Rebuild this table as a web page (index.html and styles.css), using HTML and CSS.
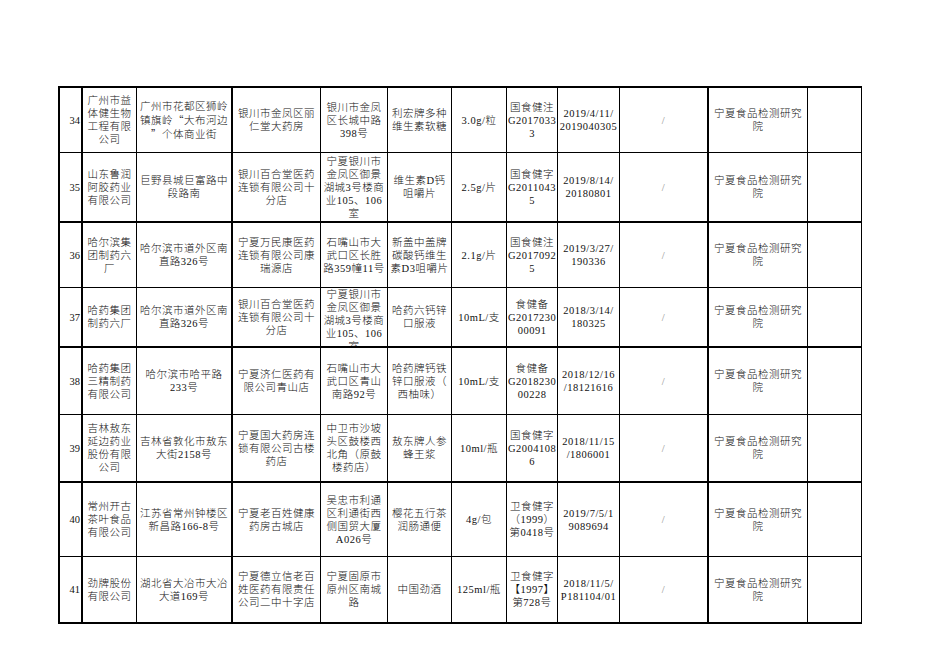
FILE: index.html
```html
<!DOCTYPE html>
<html lang="zh-CN">
<head>
<meta charset="utf-8">
<title>抽检结果</title>
<link rel="stylesheet" href="styles.css">
</head>
<body>
<div class="sheet">
  <div class="table">
    <div class="row r34">
      <div class="cell"><p>34</p></div>
      <div class="cell"><p>广州市益<br>体健生物<br>工程有限<br>公司</p></div>
      <div class="cell"><p>广州市花都区狮岭<br>镇旗岭<span class="q">“</span>大布河边<br><span class="q">”</span>个体商业街</p></div>
      <div class="cell"><p>银川市金凤区丽<br>仁堂大药房</p></div>
      <div class="cell"><p>银川市金凤<br>区长城中路<br>398号</p></div>
      <div class="cell"><p>利宏牌多种<br>维生素软糖</p></div>
      <div class="cell"><p>3.0g/粒</p></div>
      <div class="cell"><p>国食健注<br>G2017033<br>3</p></div>
      <div class="cell"><p>2019/4/11/<br>2019040305</p></div>
      <div class="cell"><p class="none">/</p></div>
      <div class="cell"><p>宁夏食品检测研究<br>院</p></div>
      <div class="cell"></div>
    </div>
    <div class="row r35 thick">
      <div class="cell"><p>35</p></div>
      <div class="cell"><p>山东鲁润<br>阿胶药业<br>有限公司</p></div>
      <div class="cell"><p>巨野县城巨富路中<br>段路南</p></div>
      <div class="cell"><p>银川百合堂医药<br>连锁有限公司十<br>分店</p></div>
      <div class="cell"><p>宁夏银川市<br>金凤区御景<br>湖城3号楼商<br>业105、106<br>室</p></div>
      <div class="cell"><p>维生素D钙<br>咀嚼片</p></div>
      <div class="cell"><p>2.5g/片</p></div>
      <div class="cell"><p>国食健字<br>G2011043<br>5</p></div>
      <div class="cell"><p>2019/8/14/<br>20180801</p></div>
      <div class="cell"><p class="none">/</p></div>
      <div class="cell"><p>宁夏食品检测研究<br>院</p></div>
      <div class="cell"></div>
    </div>
    <div class="row r36">
      <div class="cell"><p>36</p></div>
      <div class="cell"><p>哈尔滨集<br>团制药六<br>厂</p></div>
      <div class="cell"><p>哈尔滨市道外区南<br>直路326号</p></div>
      <div class="cell"><p>宁夏万民康医药<br>连锁有限公司康<br>瑞源店</p></div>
      <div class="cell"><p>石嘴山市大<br>武口区长胜<br>路359幢11号</p></div>
      <div class="cell"><p>新盖中盖牌<br>碳酸钙维生<br>素D3咀嚼片</p></div>
      <div class="cell"><p>2.1g/片</p></div>
      <div class="cell"><p>国食健注<br>G2017092<br>5</p></div>
      <div class="cell"><p>2019/3/27/<br>190336</p></div>
      <div class="cell"><p class="none">/</p></div>
      <div class="cell"><p>宁夏食品检测研究<br>院</p></div>
      <div class="cell"></div>
    </div>
    <div class="row r37 thick">
      <div class="cell"><p>37</p></div>
      <div class="cell"><p>哈药集团<br>制药六厂</p></div>
      <div class="cell"><p>哈尔滨市道外区南<br>直路326号</p></div>
      <div class="cell"><p>银川百合堂医药<br>连锁有限公司十<br>分店</p></div>
      <div class="cell"><p>宁夏银川市<br>金凤区御景<br>湖城3号楼商<br>业105、106<br>室</p></div>
      <div class="cell"><p>哈药六钙锌<br>口服液</p></div>
      <div class="cell"><p>10mL/支</p></div>
      <div class="cell"><p>食健备<br>G2017230<br>00091</p></div>
      <div class="cell"><p>2018/3/14/<br>180325</p></div>
      <div class="cell"><p class="none">/</p></div>
      <div class="cell"><p>宁夏食品检测研究<br>院</p></div>
      <div class="cell"></div>
    </div>
    <div class="row r38">
      <div class="cell"><p>38</p></div>
      <div class="cell"><p>哈药集团<br>三精制药<br>有限公司</p></div>
      <div class="cell"><p>哈尔滨市哈平路<br>233号</p></div>
      <div class="cell"><p>宁夏济仁医药有<br>限公司青山店</p></div>
      <div class="cell"><p>石嘴山市大<br>武口区青山<br>南路92号</p></div>
      <div class="cell"><p>哈药牌钙铁<br>锌口服液（<br>西柚味）</p></div>
      <div class="cell"><p>10mL/支</p></div>
      <div class="cell"><p>食健备<br>G2018230<br>00228</p></div>
      <div class="cell"><p>2018/12/16<br>/18121616</p></div>
      <div class="cell"><p class="none">/</p></div>
      <div class="cell"><p>宁夏食品检测研究<br>院</p></div>
      <div class="cell"></div>
    </div>
    <div class="row r39 thick">
      <div class="cell"><p>39</p></div>
      <div class="cell"><p>吉林敖东<br>延边药业<br>股份有限<br>公司</p></div>
      <div class="cell"><p>吉林省敦化市敖东<br>大街2158号</p></div>
      <div class="cell"><p>宁夏国大药房连<br>锁有限公司古楼<br>药店</p></div>
      <div class="cell"><p>中卫市沙坡<br>头区鼓楼西<br>北角（原鼓<br>楼药店）</p></div>
      <div class="cell"><p>敖东牌人参<br>蜂王浆</p></div>
      <div class="cell"><p>10ml/瓶</p></div>
      <div class="cell"><p>国食健字<br>G2004108<br>6</p></div>
      <div class="cell"><p>2018/11/15<br>/1806001</p></div>
      <div class="cell"><p class="none">/</p></div>
      <div class="cell"><p>宁夏食品检测研究<br>院</p></div>
      <div class="cell"></div>
    </div>
    <div class="row r40">
      <div class="cell"><p>40</p></div>
      <div class="cell"><p>常州开古<br>茶叶食品<br>有限公司</p></div>
      <div class="cell"><p>江苏省常州钟楼区<br>新昌路166-8号</p></div>
      <div class="cell"><p>宁夏老百姓健康<br>药房古城店</p></div>
      <div class="cell"><p>吴忠市利通<br>区利通街西<br>侧国贸大厦<br>A026号</p></div>
      <div class="cell"><p>樱花五行茶<br>润肠通便</p></div>
      <div class="cell"><p>4g/包</p></div>
      <div class="cell"><p>卫食健字<br>（1999）<br>第0418号</p></div>
      <div class="cell"><p>2019/7/5/1<br>9089694</p></div>
      <div class="cell"><p class="none">/</p></div>
      <div class="cell"><p>宁夏食品检测研究<br>院</p></div>
      <div class="cell"></div>
    </div>
    <div class="row r41 thick">
      <div class="cell"><p>41</p></div>
      <div class="cell"><p>劲牌股份<br>有限公司</p></div>
      <div class="cell"><p>湖北省大冶市大冶<br>大道169号</p></div>
      <div class="cell"><p>宁夏德立信老百<br>姓医药有限责任<br>公司二中十字店</p></div>
      <div class="cell"><p>宁夏固原市<br>原州区南城<br>路</p></div>
      <div class="cell"><p>中国劲酒</p></div>
      <div class="cell"><p>125ml/瓶</p></div>
      <div class="cell"><p>卫食健字<br>【1997】<br>第728号</p></div>
      <div class="cell"><p>2018/11/5/<br>P181104/01</p></div>
      <div class="cell"><p class="none">/</p></div>
      <div class="cell"><p>宁夏食品检测研究<br>院</p></div>
      <div class="cell"></div>
    </div>
  </div>
</div>
</body>
</html>
```

FILE: styles.css
```css
html, body {
  margin: 0;
  padding: 0;
  background: #ffffff;
}

.sheet {
  padding: 86px 0 0 58px;
  font-family: "Liberation Serif", "Noto Sans CJK SC", serif;
  font-size: 10.5px;
  font-weight: 300;
  letter-spacing: 0.5px;
  line-height: 13px;
  color: #111111;
}

.table {
  box-sizing: border-box;
  width: 804px;
  border-top: 2px solid #000;
  border-left: 2px solid #000;
}

.row {
  box-sizing: border-box;
  display: grid;
  grid-template-columns: 23px 54px 96px 88px 67px 64px 55px 51px 62px 89px 99px 54px;
  border-bottom: 1px solid #000;
}

.row.thick {
  border-bottom-width: 2px;
}

.r34 { height: 65px; }
.r35 { height: 70px; }
.r36 { height: 65px; }
.r37 { height: 60px; }
.r38 { height: 67px; }
.r39 { height: 68px; }
.r40 { height: 74px; }
.r41 { height: 67px; }

.cell {
  box-sizing: border-box;
  display: flex;
  flex-direction: column;
  overflow: hidden;
  padding: 0 1px;
  border-right: 1px solid #000;
  white-space: nowrap;
}

.cell > p {
  margin: auto 0;
  text-align: center;
}

.row > .cell:nth-child(1),
.row > .cell:nth-child(3),
.row > .cell:nth-child(10) {
  border-right-width: 2px;
}

.row > .cell:nth-child(1) > p {
  text-align: right;
  letter-spacing: 0;
}

.q {
  font-family: "Noto Sans CJK SC", sans-serif;
}

.none {
  color: #8c8c8c;
}
```
